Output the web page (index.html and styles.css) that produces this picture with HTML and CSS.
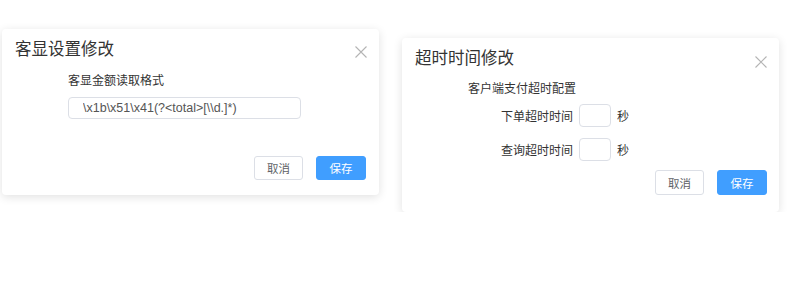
FILE: index.html
```html
<!DOCTYPE html>
<html lang="zh-CN">
<head>
    <meta charset="UTF-8">
    <meta name="viewport" content="width=device-width, initial-scale=1.0">
    <title>设置修改</title>
    <link rel="stylesheet" href="styles.css">
</head>
<body>
    <div class="stage">
        <!-- 客显设置 -->
        <div class="dialog dialog-display">
            <div class="dialog-header">
                <h2 class="dialog-title">客显设置修改</h2>
                <span class="dialog-close">
                    <svg width="12" height="12" viewBox="0 0 12 12"><path d="M0.5 0.5L11.5 11.5M11.5 0.5L0.5 11.5" stroke="#b4b4b4" stroke-width="1.1" fill="none"/></svg>
                </span>
            </div>
            <div class="dialog-body">
                <div class="field-label">客显金额读取格式</div>
                <input class="text-input" type="text" value="\x1b\x51\x41(?<total>[\\d.]*)">
            </div>
            <div class="dialog-footer">
                <button class="button">取消</button>
                <button class="button primary">保存</button>
            </div>
        </div>

        <!-- 超时时间 -->
        <div class="dialog dialog-timeout">
            <div class="dialog-header">
                <h2 class="dialog-title">超时时间修改</h2>
                <span class="dialog-close">
                    <svg width="12" height="12" viewBox="0 0 12 12"><path d="M0.5 0.5L11.5 11.5M11.5 0.5L0.5 11.5" stroke="#b4b4b4" stroke-width="1.1" fill="none"/></svg>
                </span>
            </div>
            <div class="dialog-body">
                <div class="field-label">客户端支付超时配置</div>
                <div class="time-grid">
                    <span class="row-label">下单超时时间</span>
                    <input class="small-input" type="text">
                    <span>秒</span>
                    <span class="row-label">查询超时时间</span>
                    <input class="small-input" type="text">
                    <span>秒</span>
                </div>
            </div>
            <div class="dialog-footer">
                <button class="button">取消</button>
                <button class="button primary">保存</button>
            </div>
        </div>
    </div>
</body>
</html>
```

FILE: styles.css
```css
body {
    margin: 0;
    background-color: #ffffff;
    font-family: 'Noto Sans CJK SC', sans-serif;
    color: #333333;
}

.stage {
    display: flex;
    align-items: flex-start;
    padding-left: 2px;
}

.dialog {
    width: 377px;
    background-color: #ffffff;
    border-radius: 4px;
    box-shadow: 0 2px 10px rgba(0, 0, 0, 0.12);
}

.dialog-display {
    margin-top: 29px;
}

.dialog-timeout {
    margin-top: 38px;
    margin-left: 23px;
}

.dialog-header {
    display: flex;
    justify-content: space-between;
    align-items: flex-start;
    padding: 7px 12px 0 13px;
}

.dialog-title {
    margin: 0;
    font-size: 16.5px;
    font-weight: normal;
    line-height: 24px;
    color: #333333;
}

.dialog-close {
    display: block;
    width: 12px;
    height: 12px;
    margin-top: 10px;
}

.dialog-timeout .dialog-close {
    margin-top: 11px;
}

.dialog-close svg {
    display: block;
}

.dialog-body {
    padding-left: 66px;
}

.dialog-display .dialog-body {
    padding-top: 11px;
}

.dialog-timeout .dialog-body {
    padding-top: 10px;
}

.field-label {
    font-size: 12px;
    line-height: 18px;
}

.text-input {
    display: block;
    box-sizing: border-box;
    width: 233px;
    height: 22px;
    margin-top: 8px;
    padding: 0 14px;
    border: 1px solid #dcdfe6;
    border-radius: 4px;
    font-family: 'Liberation Sans', sans-serif;
    font-size: 12.5px;
    color: #555555;
    outline: none;
}

.time-grid {
    display: grid;
    grid-template-columns: 105px 32px auto;
    column-gap: 6px;
    row-gap: 11px;
    align-items: center;
    margin-top: 7px;
    font-size: 12px;
    line-height: 18px;
}

.row-label {
    text-align: right;
}

.small-input {
    box-sizing: border-box;
    width: 32px;
    height: 23px;
    border: 1px solid #dcdfe6;
    border-radius: 4px;
    outline: none;
}

.dialog-footer {
    display: flex;
    justify-content: flex-end;
    gap: 13px;
    padding: 0 13px 15px 0;
}

.dialog-display .dialog-footer {
    margin-top: 37px;
}

.dialog-timeout .dialog-footer {
    margin-top: 9px;
    padding-right: 12px;
    padding-bottom: 17px;
}

.dialog-timeout .button {
    height: 25px;
}

.button {
    box-sizing: border-box;
    width: 49px;
    height: 24px;
    padding: 0;
    border: 1px solid #dcdfe6;
    border-radius: 3px;
    background-color: #ffffff;
    color: #606266;
    font-family: 'Noto Sans CJK SC', sans-serif;
    font-size: 11.5px;
    cursor: pointer;
}

.button.primary {
    width: 50px;
    border-color: #409eff;
    background-color: #409eff;
    color: #ffffff;
}
```
